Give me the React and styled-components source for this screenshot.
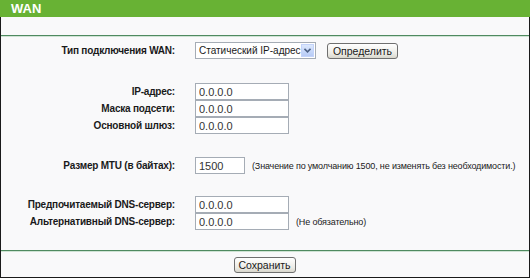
import React from "react";
import styled, { createGlobalStyle } from "styled-components";

const GlobalStyle = createGlobalStyle`
  html, body {
    margin: 0;
    padding: 0;
    background: #ffffff;
  }
  body {
    font-family: "Liberation Sans", Arial, sans-serif;
  }
`;

const Panel = styled.div`
  width: 530px;
  height: 278px;
  box-sizing: border-box;
  background: #f9f9fa;
  border: 1px solid #1a1a1a;
  border-top: none;
  display: flex;
  flex-direction: column;
`;

const Header = styled.div`
  height: 17px;
  margin: 0 -1px;
  background: #68b234;
  color: #ffffff;
  font-size: 13px;
  font-weight: bold;
  line-height: 17px;
  padding-left: 11px;
`;

const Divider = styled.div`
  height: 1px;
  background: #4f8a60;
  border-bottom: 1px solid #cfe3d4;
  margin-top: ${(p) => p.$top}px;
`;

const Row = styled.div`
  display: grid;
  grid-template-columns: 174px 1fr;
  column-gap: 20px;
  align-items: center;
  height: 17px;
  margin-top: ${(p) => p.$top || 0}px;
`;

const Label = styled.div`
  text-align: right;
  font-size: 10px;
  letter-spacing: -0.2px;
  font-weight: bold;
  color: #1a1a1a;
  white-space: nowrap;
`;

const Controls = styled.div`
  display: flex;
  align-items: center;
  gap: ${(p) => p.$gap || 7}px;
`;

const TextInput = styled.input`
  box-sizing: border-box;
  width: ${(p) => p.$w || 94}px;
  height: 17px;
  border: 1px solid #a5acb5;
  background: #ffffff;
  padding: 0 3px;
  font-family: "Liberation Sans", Arial, sans-serif;
  font-size: 11px;
  color: #333333;
  outline: none;
`;

const Note = styled.span`
  font-size: 9px;
  letter-spacing: -0.15px;
  color: #1a1a1a;
  white-space: nowrap;
`;

const SelectBox = styled.div`
  box-sizing: border-box;
  width: 121px;
  height: 17px;
  border: 1px solid #a5acb5;
  background: #ffffff;
  display: flex;
  align-items: center;
  padding-left: 3px;
  font-size: 10px;
  color: #1a1a1a;
`;

const SelectText = styled.span`
  flex: 1;
  white-space: nowrap;
`;

const ArrowBox = styled.span`
  width: 13px;
  height: 13px;
  margin-right: 1px;
  background: linear-gradient(#dce8fd, #b7cbf6);
  border: 1px solid #c3d3fa;
  box-sizing: border-box;
  display: flex;
  align-items: center;
  justify-content: center;
`;

const Button = styled.button`
  box-sizing: border-box;
  height: 16px;
  width: ${(p) => p.$w}px;
  padding: 0;
  border: 1px solid #6f6f6f;
  border-radius: 3px;
  background: linear-gradient(#ffffff, #ebeae4 70%, #d8d6cc);
  font-family: "Liberation Sans", Arial, sans-serif;
  font-size: 10.5px;
  line-height: 14px;
  color: #1a1a1a;
`;

const Footer = styled.div`
  display: flex;
  justify-content: center;
  margin-top: 5px;
  padding-right: 1px;
`;

const App = () => {
  return (
    <>
      <GlobalStyle />
      <Panel>
        <Header>WAN</Header>
        <Divider $top={18} />

        <Row $top={5}>
          <Label>Тип подключения WAN:</Label>
          <Controls $gap={11}>
            <SelectBox>
              <SelectText>Статический IP-адрес</SelectText>
              <ArrowBox>
                <svg width="7" height="5" viewBox="0 0 7 5">
                  <path d="M0.5 0.8 L3.5 3.8 L6.5 0.8" fill="none" stroke="#4d6185" strokeWidth="1.6" />
                </svg>
              </ArrowBox>
            </SelectBox>
            <Button $w={71}>Определить</Button>
          </Controls>
        </Row>

        <Row $top={24}>
          <Label>IP-адрес:</Label>
          <Controls>
            <TextInput defaultValue="0.0.0.0" />
          </Controls>
        </Row>
        <Row>
          <Label>Маска подсети:</Label>
          <Controls>
            <TextInput defaultValue="0.0.0.0" />
          </Controls>
        </Row>
        <Row>
          <Label>Основной шлюз:</Label>
          <Controls>
            <TextInput defaultValue="0.0.0.0" />
          </Controls>
        </Row>

        <Row $top={23}>
          <Label>Размер MTU (в байтах):</Label>
          <Controls>
            <TextInput $w={50} defaultValue="1500" />
            <Note>(Значение по умолчанию 1500, не изменять без необходимости.)</Note>
          </Controls>
        </Row>

        <Row $top={22}>
          <Label>Предпочитаемый DNS-сервер:</Label>
          <Controls>
            <TextInput defaultValue="0.0.0.0" />
          </Controls>
        </Row>
        <Row>
          <Label>Альтернативный DNS-сервер:</Label>
          <Controls>
            <TextInput defaultValue="0.0.0.0" />
            <Note>(Не обязательно)</Note>
          </Controls>
        </Row>

        <Divider $top={20} />
        <Footer>
          <Button $w={62}>Сохранить</Button>
        </Footer>
      </Panel>
    </>
  );
};

export default App;
